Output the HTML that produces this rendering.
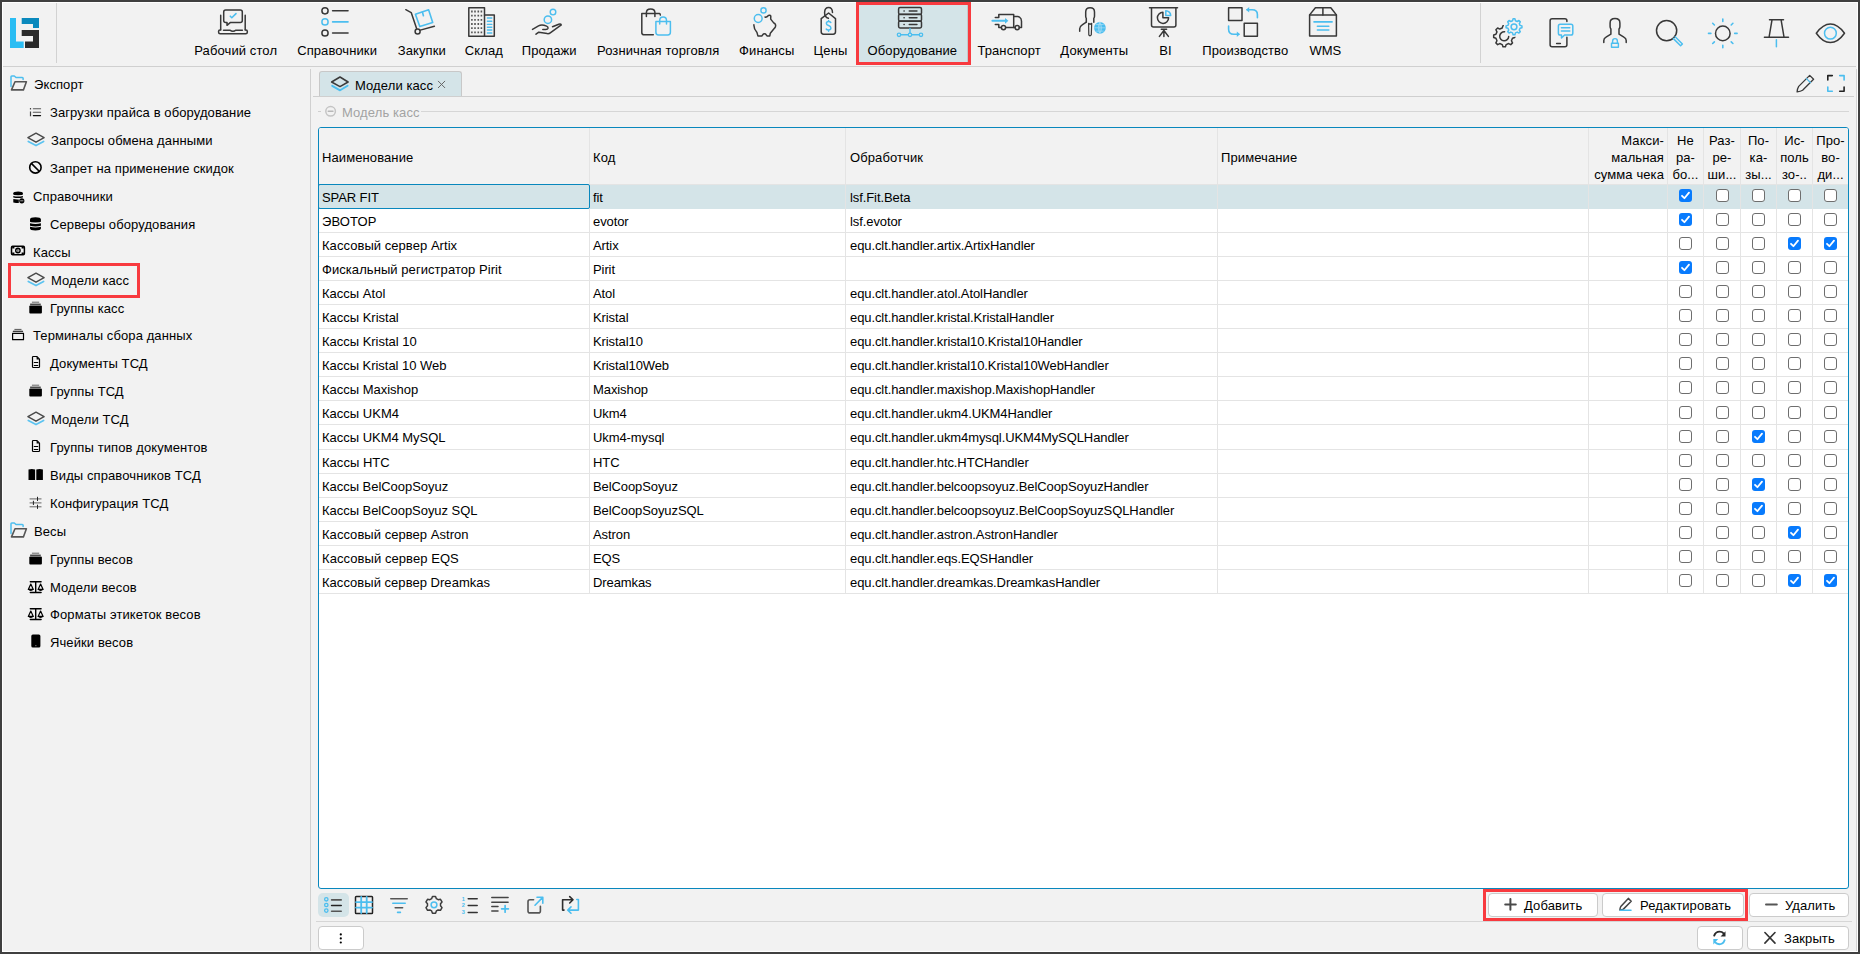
<!DOCTYPE html><html><head><meta charset="utf-8"><title>Модели касс</title><style>
*{box-sizing:border-box}
html,body{margin:0;padding:0}
body{width:1860px;height:954px;overflow:hidden;position:relative;background:#f2f2f2;font-family:"Liberation Sans",sans-serif;font-size:13px;color:#000}
.a{position:absolute}
.t{position:absolute;white-space:nowrap;line-height:16px;font-size:13px}
.hl{position:absolute;height:1px}
.vl{position:absolute;width:1px}
svg{position:absolute;overflow:visible}
.cb{position:absolute;width:13px;height:13px;border:1.3px solid #6e6e6e;border-radius:3px;background:#fff}
.cbc{position:absolute;width:13px;height:13px;border-radius:3px;background:#087bfd}
.btn{position:absolute;background:#fff;border:1px solid #cbcbcb;border-radius:4px}
</style></head><body>
<div class="a" style="left:0;top:0;width:1860px;height:2px;background:#404040"></div>
<div class="a" style="left:0;top:952px;width:1860px;height:2px;background:#404040"></div>
<div class="a" style="left:0;top:0;width:2px;height:954px;background:#404040"></div>
<div class="a" style="left:1858px;top:0;width:2px;height:954px;background:#404040"></div>
<div class="a" style="left:2px;top:2px;width:1856px;height:1px;background:#fff"></div>
<div class="a" style="left:2px;top:2px;width:1px;height:950px;background:#fff"></div>
<div class="a" style="left:1857px;top:2px;width:1px;height:950px;background:#fff"></div>
<div class="a" style="left:2px;top:951px;width:1856px;height:1px;background:#fff"></div>
<svg style="left:10px;top:18px" width="29" height="30" viewBox="0 0 29 30"><path d="M0 0H6V23.5H13.7V30H0Z" fill="#2bbdf3"/><path d="M11.7 0H29V10H23V6H11.7Z" fill="#0a89bd"/><path d="M11.7 12H29V30H15V23.5H23V18H11.7Z" fill="#2b2b2b"/></svg>
<div class="vl" style="left:56px;top:3px;height:60px;background:#d2d2d2"></div>
<div class="vl" style="left:1480px;top:3px;height:60px;background:#d2d2d2"></div>
<div class="hl" style="left:3px;top:66px;width:1853px;background:#d0d0d0"></div>
<div class="a" style="left:856px;top:2px;width:115px;height:63px;background:#d4e4e8;border:3px solid #f83a3f"></div>
<div class="vl" style="left:967px;top:5px;height:57px;background:#c4c8ca"></div>
<div class="t" style="left:135.7px;width:200px;text-align:center;top:43px;letter-spacing:0.100px">Рабочий стол</div>
<div class="t" style="left:237.1px;width:200px;text-align:center;top:43px;letter-spacing:0.100px">Справочники</div>
<div class="t" style="left:321.8px;width:200px;text-align:center;top:43px;letter-spacing:0.100px">Закупки</div>
<div class="t" style="left:383.9px;width:200px;text-align:center;top:43px;letter-spacing:0.100px">Склад</div>
<div class="t" style="left:449.2px;width:200px;text-align:center;top:43px;letter-spacing:0.100px">Продажи</div>
<div class="t" style="left:558.2px;width:200px;text-align:center;top:43px;letter-spacing:0.100px">Розничная торговля</div>
<div class="t" style="left:666.7px;width:200px;text-align:center;top:43px;letter-spacing:0.100px">Финансы</div>
<div class="t" style="left:730.5px;width:200px;text-align:center;top:43px;letter-spacing:0.100px">Цены</div>
<div class="t" style="left:812.4px;width:200px;text-align:center;top:43px;letter-spacing:0.100px">Оборудование</div>
<div class="t" style="left:909.1px;width:200px;text-align:center;top:43px;letter-spacing:0.100px">Транспорт</div>
<div class="t" style="left:994.3px;width:200px;text-align:center;top:43px;letter-spacing:0.100px">Документы</div>
<div class="t" style="left:1065.4px;width:200px;text-align:center;top:43px;letter-spacing:-0.090px">BI</div>
<div class="t" style="left:1145.3px;width:200px;text-align:center;top:43px;letter-spacing:0.100px">Производство</div>
<div class="t" style="left:1225.3px;width:200px;text-align:center;top:43px;letter-spacing:-0.090px">WMS</div>
<svg style="left:0;top:0" width="1860" height="954" viewBox="0 0 1860 954"><defs><clipPath id="gclip"><path d="M1480 14H1540V60H1480Z M1514 26.8m-10.3 0a10.3 10.3 0 1 0 20.6 0a10.3 10.3 0 1 0 -20.6 0Z" clip-rule="evenodd" fill-rule="evenodd"/></clipPath></defs><path d="M220.7 15.3V29.7M245.2 15.3V29.7" fill="none" stroke="#383838" stroke-width="1.5" stroke-linecap="round" stroke-linejoin="round" /><path d="M220.7 29.9H220Q218.6 29.9 218.6 31.3V32.2Q218.6 33.7 220.1 33.7H245.8Q247.3 33.7 247.3 32.2V31.3Q247.3 29.9 245.9 29.9H245.2" fill="none" stroke="#383838" stroke-width="1.5" stroke-linecap="round" stroke-linejoin="round" /><path d="M223.5 30.2H230.2Q231.2 31.2 232.9 31.2Q234.6 31.2 235.6 30.2H242.4" fill="none" stroke="#383838" stroke-width="1.5" stroke-linecap="round" stroke-linejoin="round" /><path d="M225.7 10.1H240.3Q242.3 10.1 242.3 12.1V20.4Q242.3 22.4 240.3 22.4H230.5L227 25.3V22.4H225.7Q223.7 22.4 223.7 20.4V12.1Q223.7 10.1 225.7 10.1Z" fill="none" stroke="#383838" stroke-width="1.5" stroke-linecap="round" stroke-linejoin="round" /><path d="M230.3 16.2L231.8 17.7L236 13.6" fill="none" stroke="#4cbeef" stroke-width="1.6" stroke-linecap="round" stroke-linejoin="round" /><circle cx="325" cy="10.8" r="3.1" fill="none" stroke="#383838" stroke-width="1.5"/><path d="M332.6 10.8H348" fill="none" stroke="#383838" stroke-width="1.6" stroke-linecap="round" stroke-linejoin="round" /><circle cx="325" cy="21.9" r="3.1" fill="none" stroke="#4cbeef" stroke-width="1.5"/><path d="M332.6 21.9H348" fill="none" stroke="#4cbeef" stroke-width="1.6" stroke-linecap="round" stroke-linejoin="round" /><circle cx="325" cy="33.0" r="3.1" fill="none" stroke="#383838" stroke-width="1.5"/><path d="M332.6 33.0H348" fill="none" stroke="#383838" stroke-width="1.6" stroke-linecap="round" stroke-linejoin="round" /><path d="M405.8 9.7L411.2 12.6L416.6 28.6" fill="none" stroke="#383838" stroke-width="1.5" stroke-linecap="round" stroke-linejoin="round" /><circle cx="417.6" cy="31.6" r="2.5" fill="none" stroke="#383838" stroke-width="1.5"/><path d="M420.3 30.1L434.4 26.2" fill="none" stroke="#383838" stroke-width="1.5" stroke-linecap="round" stroke-linejoin="round" /><path d="M415.4 14.3L428.6 9.8L432.7 22.5L419.8 26.6Z" fill="none" stroke="#4cbeef" stroke-width="1.6" stroke-linecap="round" stroke-linejoin="round" /><path d="M422.4 12L423.4 15.8" fill="none" stroke="#4cbeef" stroke-width="1.6" stroke-linecap="round" stroke-linejoin="round" /><path d="M468.8 7.8H484.5V36.2H468.8Z" fill="none" stroke="#383838" stroke-width="1.5" stroke-linecap="round" stroke-linejoin="round" /><path d="M484.5 15H494.3V36.2H484.5" fill="none" stroke="#383838" stroke-width="1.5" stroke-linecap="round" stroke-linejoin="round" /><path d="M471.09999999999997 10.6h1.6v1.8h-1.6zM471.09999999999997 14.799999999999999h1.6v1.8h-1.6zM471.09999999999997 18.900000000000002h1.6v1.8h-1.6zM471.09999999999997 23.1h1.6v1.8h-1.6zM471.09999999999997 27.3h1.6v1.8h-1.6zM471.09999999999997 31.4h1.6v1.8h-1.6zM474.2 10.6h1.6v1.8h-1.6zM474.2 14.799999999999999h1.6v1.8h-1.6zM474.2 18.900000000000002h1.6v1.8h-1.6zM474.2 23.1h1.6v1.8h-1.6zM474.2 27.3h1.6v1.8h-1.6zM474.2 31.4h1.6v1.8h-1.6zM477.5 10.6h1.6v1.8h-1.6zM477.5 14.799999999999999h1.6v1.8h-1.6zM477.5 18.900000000000002h1.6v1.8h-1.6zM477.5 23.1h1.6v1.8h-1.6zM477.5 27.3h1.6v1.8h-1.6zM477.5 31.4h1.6v1.8h-1.6zM480.59999999999997 10.6h1.6v1.8h-1.6zM480.59999999999997 14.799999999999999h1.6v1.8h-1.6zM480.59999999999997 18.900000000000002h1.6v1.8h-1.6zM480.59999999999997 23.1h1.6v1.8h-1.6zM480.59999999999997 27.3h1.6v1.8h-1.6zM480.59999999999997 31.4h1.6v1.8h-1.6z" fill="#555"/><path d="M487.4 18H491.8M487.4 21.2H491.8M487.4 24.4H491.8M487.4 27.2H491.8M487.4 30H491.8M487.4 33H491.8" fill="none" stroke="#4cbeef" stroke-width="1.4" stroke-linecap="round" stroke-linejoin="round" /><circle cx="553" cy="12.1" r="2.8" fill="none" stroke="#4cbeef" stroke-width="1.4"/><circle cx="547.9" cy="19.7" r="3.7" fill="none" stroke="#4cbeef" stroke-width="1.5"/><path d="M532.5 29.4L538.5 25.9Q541 24.6 544 25.3L546.6 26.1Q548.3 26.8 548 28.2Q547.6 29.4 545.8 29.4H542.8" fill="none" stroke="#383838" stroke-width="1.5" stroke-linecap="round" stroke-linejoin="round" /><path d="M552.5 26.8L558.8 24.2Q560.8 23.6 561.3 24.9L550.6 32.6Q549.2 33.8 547.2 33.6L538.8 32.2L536 34.2" fill="none" stroke="#383838" stroke-width="1.5" stroke-linecap="round" stroke-linejoin="round" /><path d="M653.3 34.8H644.2Q641.8 34.8 641.8 32.4V13.6H659.4Q660.4 13.8 660.3 15.1" fill="none" stroke="#383838" stroke-width="1.5" stroke-linecap="round" stroke-linejoin="round" /><path d="M646.4 16.6V12.6Q646.4 8.9 650.6 8.9Q654.9 8.9 654.9 12.6V16.6" fill="none" stroke="#383838" stroke-width="1.5" stroke-linecap="round" stroke-linejoin="round" /><path d="M655.9 21.6H670.4V32.3Q670.4 34.9 667.8 34.9H658.5Q655.9 34.9 655.9 32.3Z" fill="none" stroke="#4cbeef" stroke-width="1.5" stroke-linecap="round" stroke-linejoin="round" /><path d="M659.7 24V20.5Q659.7 17 663.1 17Q666.5 17 666.5 20.5V24" fill="none" stroke="#4cbeef" stroke-width="1.5" stroke-linecap="round" stroke-linejoin="round" /><circle cx="763.5" cy="10.4" r="2.6" fill="none" stroke="#4cbeef" stroke-width="1.4"/><circle cx="758.2" cy="18.5" r="3.9" fill="none" stroke="#4cbeef" stroke-width="1.5"/><path d="M753.9 24.7Q753.6 28.8 757 32.6L757.9 35.9H761.8L763.4 34Q764.5 33.4 765.5 34L767 35.9H769.8L770.3 33.2L774.6 28.1Q776 26.7 775.5 24.8Q775.1 23.4 773.9 23.1L770.7 19.1L770.8 16Q770.3 14.6 768.4 15.5Q766.5 17.6 765 17" fill="none" stroke="#383838" stroke-width="1.5" stroke-linecap="round" stroke-linejoin="round" /><path d="M828.6 13L835.5 18.7V31.8Q835.5 34.2 833.1 34.2H823.6Q821.2 34.2 821.2 31.8V18.7Z" fill="none" stroke="#383838" stroke-width="1.5" stroke-linecap="round" stroke-linejoin="round" /><path d="M828.4 18.2Q824.5 17.2 824.6 12.4Q824.8 7.6 828.6 7.6Q832.3 7.6 832.5 12.5" fill="none" stroke="#383838" stroke-width="1.5" stroke-linecap="round" stroke-linejoin="round" /><path d="M830.8 22.5Q830 21.6 828.6 21.6Q826.4 21.6 826.4 23.5Q826.4 25.1 828.6 25.6Q830.9 26.2 830.9 28Q830.9 30 828.5 30Q826.9 30 826.2 29M828.6 20.6V21.6M828.6 30V31.3" fill="none" stroke="#4cbeef" stroke-width="1.5" stroke-linecap="round" stroke-linejoin="round" /><path d="M900 7.5H920.1Q921.5 7.5 921.5 8.9V13.1Q921.5 14.5 920.1 14.5H900Q898.6 14.5 898.6 13.1V8.9Q898.6 7.5 900 7.5Z" fill="none" stroke="#383838" stroke-width="1.5" stroke-linecap="round" stroke-linejoin="round" /><path d="M904 11.0H904.2" fill="none" stroke="#383838" stroke-width="1.5" stroke-linecap="round" stroke-linejoin="round" /><path d="M909.3 11.0H916.9" fill="none" stroke="#383838" stroke-width="1.6" stroke-linecap="round" stroke-linejoin="round" /><path d="M900 14.2H920.1Q921.5 14.2 921.5 15.6V19.799999999999997Q921.5 21.2 920.1 21.2H900Q898.6 21.2 898.6 19.799999999999997V15.6Q898.6 14.2 900 14.2Z" fill="none" stroke="#383838" stroke-width="1.5" stroke-linecap="round" stroke-linejoin="round" /><path d="M904 17.7H904.2" fill="none" stroke="#383838" stroke-width="1.5" stroke-linecap="round" stroke-linejoin="round" /><path d="M909.3 17.7H916.9" fill="none" stroke="#383838" stroke-width="1.6" stroke-linecap="round" stroke-linejoin="round" /><path d="M900 21.0H920.1Q921.5 21.0 921.5 22.4V26.6Q921.5 28.0 920.1 28.0H900Q898.6 28.0 898.6 26.6V22.4Q898.6 21.0 900 21.0Z" fill="none" stroke="#383838" stroke-width="1.5" stroke-linecap="round" stroke-linejoin="round" /><path d="M904 24.5H904.2" fill="none" stroke="#383838" stroke-width="1.5" stroke-linecap="round" stroke-linejoin="round" /><path d="M909.3 24.5H916.9" fill="none" stroke="#383838" stroke-width="1.6" stroke-linecap="round" stroke-linejoin="round" /><path d="M910 28.5V33M900.7 34.8H908.2M911.8 34.8H919.3" fill="none" stroke="#4cbeef" stroke-width="1.4" stroke-linecap="round" stroke-linejoin="round" /><circle cx="899" cy="34.8" r="1.7" fill="none" stroke="#4cbeef" stroke-width="1.3"/><circle cx="910" cy="34.8" r="1.7" fill="none" stroke="#4cbeef" stroke-width="1.3"/><circle cx="921" cy="34.8" r="1.7" fill="none" stroke="#4cbeef" stroke-width="1.3"/><path d="M995.3 17.4H998.8V14.4H1013.7V27.4" fill="none" stroke="#383838" stroke-width="1.5" stroke-linecap="round" stroke-linejoin="round" /><path d="M995.3 24.4H998.8V27.4H1001.3M1005.7 27.4H1015M1019.3 27.4H1021.5V21.3Q1021.5 18.4 1019.5 17.2Q1018.7 16.6 1017.8 16.6H1013.7" fill="none" stroke="#383838" stroke-width="1.5" stroke-linecap="round" stroke-linejoin="round" /><circle cx="1003.5" cy="27.6" r="2.1" fill="none" stroke="#383838" stroke-width="1.5"/><circle cx="1017.2" cy="27.6" r="2.1" fill="none" stroke="#383838" stroke-width="1.5"/><path d="M992.4 20.8H1006" fill="none" stroke="#4cbeef" stroke-width="2.0" stroke-linecap="round" stroke-linejoin="round" /><path d="M1005 17.9L1008.4 20.8L1005 23.7Z" fill="#4cbeef"/><path d="M1086.3 21.9V18.4Q1085.7 17.4 1085.7 16.2V11.9Q1085.7 7.7 1090.1 7.7Q1094.5 7.7 1094.5 11.9V16.2Q1094.5 17.4 1093.8 18.4V22.2" fill="none" stroke="#383838" stroke-width="1.5" stroke-linecap="round" stroke-linejoin="round" /><path d="M1086.3 22.1L1082.2 24.8Q1079.7 26.3 1079.7 28.8V31.2" fill="none" stroke="#383838" stroke-width="1.5" stroke-linecap="round" stroke-linejoin="round" /><path d="M1088.6 23.3L1090.1 24.3L1091.7 23.3L1091.3 34.9L1090.1 35.9L1088.8 34.9Z" fill="none" stroke="#383838" stroke-width="1.2" stroke-linecap="round" stroke-linejoin="round" /><circle cx="1099.9" cy="27.8" r="5.9" fill="#4cbeef" stroke="#4cbeef" stroke-width="0"/><path d="M1094.5 27.8H1105.3M1099.9 22.2V33.4M1096.5 24.5H1103.3M1096.5 31.1H1103.3" fill="none" stroke="#a9def7" stroke-width="0.7" stroke-linecap="round" stroke-linejoin="round" /><path d="M1099.9 22.2Q1096.6 27.8 1099.9 33.4Q1103.2 27.8 1099.9 22.2" fill="none" stroke="#a9def7" stroke-width="0.7" stroke-linecap="round" stroke-linejoin="round" /><path d="M1149.5 7.7H1177.5" fill="none" stroke="#383838" stroke-width="1.5" stroke-linecap="round" stroke-linejoin="round" /><path d="M1151.5 7.9V25Q1151.5 27 1153.5 27H1173.9Q1175.9 27 1175.9 25V7.9" fill="none" stroke="#383838" stroke-width="1.5" stroke-linecap="round" stroke-linejoin="round" /><path d="M1161.3 29.3H1166.6M1163.9 29.3V36.4M1163.9 30.5L1159.4 36.4M1163.9 30.5L1168.4 36.4" fill="none" stroke="#383838" stroke-width="1.5" stroke-linecap="round" stroke-linejoin="round" /><path d="M1162.9 12.2A5.6 5.6 0 1 0 1168.6 17.8H1162.9Z" fill="none" stroke="#383838" stroke-width="1.5" stroke-linecap="round" stroke-linejoin="round" /><path d="M1165.8 10.7V15.6H1170.7A4.9 4.9 0 0 0 1165.8 10.7Z" fill="none" stroke="#4cbeef" stroke-width="1.5" stroke-linecap="round" stroke-linejoin="round" /><path d="M1228.6 7.8H1242V20.5H1228.6Z" fill="none" stroke="#383838" stroke-width="1.5" stroke-linecap="round" stroke-linejoin="round" /><path d="M1244.2 23.3H1257.4V36.3H1244.2Z" fill="none" stroke="#383838" stroke-width="1.5" stroke-linecap="round" stroke-linejoin="round" /><path d="M1257.4 17.7V14.5Q1257.4 9.8 1252.2 9.8H1247" fill="none" stroke="#4cbeef" stroke-width="1.6" stroke-linecap="round" stroke-linejoin="round" /><path d="M1246 9.8L1249.2 7.1V12.5Z" fill="#4cbeef"/><path d="M1228.6 26V29.2Q1228.6 34.2 1233.8 34.2H1238.8" fill="none" stroke="#4cbeef" stroke-width="1.6" stroke-linecap="round" stroke-linejoin="round" /><path d="M1240 34.2L1236.8 31.5V36.9Z" fill="#4cbeef"/><path d="M1309.6 14.9H1336.4V36H1309.6Z" fill="none" stroke="#383838" stroke-width="1.5" stroke-linecap="round" stroke-linejoin="round" /><path d="M1309.6 14.9L1315.4 7.7H1330.8L1336.4 14.9M1322.9 7.7V14.9" fill="none" stroke="#383838" stroke-width="1.5" stroke-linecap="round" stroke-linejoin="round" /><path d="M1314 21.9H1332.1M1317.4 26.3H1328.8M1317.4 30H1328.8" fill="none" stroke="#4cbeef" stroke-width="1.6" stroke-linecap="round" stroke-linejoin="round" /><path d="M1512.55 20.77 L1513.06 18.86 L1514.94 18.86 L1515.45 20.77 L1517.24 21.51 L1518.95 20.52 L1520.28 21.85 L1519.29 23.56 L1520.03 25.35 L1521.94 25.86 L1521.94 27.74 L1520.03 28.25 L1519.29 30.04 L1520.28 31.75 L1518.95 33.08 L1517.24 32.09 L1515.45 32.83 L1514.94 34.74 L1513.06 34.74 L1512.55 32.83 L1510.76 32.09 L1509.05 33.08 L1507.72 31.75 L1508.71 30.04 L1507.97 28.25 L1506.06 27.74 L1506.06 25.86 L1507.97 25.35 L1508.71 23.56 L1507.72 21.85 L1509.05 20.52 L1510.76 21.51Z" fill="none" stroke="#4cbeef" stroke-width="1.5" stroke-linecap="round" stroke-linejoin="round" /><circle cx="1514" cy="26.8" r="2.9" fill="none" stroke="#4cbeef" stroke-width="1.5"/><g clip-path="url(#gclip)"><path d="M1495.93 38.28 L1493.67 37.55 L1493.67 35.05 L1495.93 34.32 L1496.95 31.86 L1495.88 29.74 L1497.64 27.98 L1499.76 29.05 L1502.22 28.03 L1502.95 25.77 L1505.45 25.77 L1506.18 28.03 L1508.64 29.05 L1510.76 27.98 L1512.52 29.74 L1511.45 31.86 L1512.47 34.32 L1514.73 35.05 L1514.73 37.55 L1512.47 38.28 L1511.45 40.74 L1512.52 42.86 L1510.76 44.62 L1508.64 43.55 L1506.18 44.57 L1505.45 46.83 L1502.95 46.83 L1502.22 44.57 L1499.76 43.55 L1497.64 44.62 L1495.88 42.86 L1496.95 40.74Z" fill="none" stroke="#383838" stroke-width="1.5" stroke-linecap="round" stroke-linejoin="round" /></g><path d="M1504.6 31.8A4.5 4.5 0 1 0 1508.7 36.6" fill="none" stroke="#383838" stroke-width="1.5" stroke-linecap="round" stroke-linejoin="round" /><path d="M1566.9 21.5V20.8Q1566.9 18.8 1564.9 18.8H1552.1Q1550.1 18.8 1550.1 20.8V44.7Q1550.1 46.7 1552.1 46.7H1564.9Q1566.9 46.7 1566.9 44.7V37.2" fill="none" stroke="#383838" stroke-width="1.5" stroke-linecap="round" stroke-linejoin="round" /><path d="M1556.6 43.4H1560.4" fill="none" stroke="#383838" stroke-width="1.5" stroke-linecap="round" stroke-linejoin="round" /><path d="M1560.2 24.3H1571Q1572.8 24.3 1572.8 26.1V33.2Q1572.8 35 1571 35H1564.6L1561.5 38V35H1560.2Q1558.4 35 1558.4 33.2V26.1Q1558.4 24.3 1560.2 24.3Z" fill="none" stroke="#4cbeef" stroke-width="1.5" stroke-linecap="round" stroke-linejoin="round" /><path d="M1561.4 27.8H1569.8M1561.4 31.1H1569.8" fill="none" stroke="#4cbeef" stroke-width="1.5" stroke-linecap="round" stroke-linejoin="round" /><path d="M1603.8 42.6V40.6Q1603.8 38.4 1606 37.2L1610.9 34.2V29Q1610.1 28 1610.1 26.5V22.9Q1610.1 18.6 1615 18.6Q1619.9 18.6 1619.9 22.9V26.5Q1619.9 28 1619 29V34.2L1623.9 37.2Q1626.2 38.4 1626.2 40.6V42.6" fill="none" stroke="#383838" stroke-width="1.5" stroke-linecap="round" stroke-linejoin="round" /><path d="M1611.5 43.3H1618.4V47.2H1611.5Z" fill="none" stroke="#4cbeef" stroke-width="1.4" stroke-linecap="round" stroke-linejoin="round" /><path d="M1612.6 43.1V41.2Q1612.6 38.6 1615 38.6Q1617.4 38.6 1617.4 41.2V43.1" fill="none" stroke="#4cbeef" stroke-width="1.4" stroke-linecap="round" stroke-linejoin="round" /><circle cx="1666.6" cy="30.6" r="10.1" fill="none" stroke="#383838" stroke-width="1.5"/><path d="M1673.4 38.6L1680.6 45.8L1682.4 44L1675.2 36.8" fill="none" stroke="#4cbeef" stroke-width="1.5" stroke-linecap="round" stroke-linejoin="round" /><circle cx="1722.8" cy="33.4" r="7.3" fill="none" stroke="#383838" stroke-width="1.5"/><path d="M1734.70 33.40L1737.10 33.40M1731.21 41.81L1732.91 43.51M1722.80 45.30L1722.80 47.70M1714.39 41.81L1712.69 43.51M1710.90 33.40L1708.50 33.40M1714.39 24.99L1712.69 23.29M1722.80 21.50L1722.80 19.10M1731.21 24.99L1732.91 23.29" fill="none" stroke="#4cbeef" stroke-width="1.6" stroke-linecap="round" stroke-linejoin="round" /><path d="M1769.5 19.8H1783.5M1772 19.8L1769.1 37M1781.1 19.8L1784 37M1764.4 37.2H1788.5" fill="none" stroke="#383838" stroke-width="1.5" stroke-linecap="round" stroke-linejoin="round" /><path d="M1776.4 39.8V46.7" fill="none" stroke="#4cbeef" stroke-width="1.5" stroke-linecap="round" stroke-linejoin="round" /><path d="M1816.3 33.2Q1823 24 1830.4 24Q1837.8 24 1844.5 33.2Q1837.8 42.6 1830.4 42.6Q1823 42.6 1816.3 33.2Z" fill="none" stroke="#383838" stroke-width="1.5" stroke-linecap="round" stroke-linejoin="round" /><circle cx="1830.4" cy="33.2" r="5.9" fill="none" stroke="#4cbeef" stroke-width="1.5"/></svg>
<div class="t" style="left:34px;top:77px;letter-spacing:0.100px">Экспорт</div>
<svg style="left:0;top:0" width="1860" height="954" viewBox="0 0 1860 954"><path d="M11 86.4V76.8Q11 76 11.8 76H14.3L16 77.5H22.3Q23.1 77.5 23.1 78.3V79.6" fill="none" stroke="#4cbeef" stroke-width="1.5" stroke-linecap="round" stroke-linejoin="round" /><path d="M15 81.7H26.4L23.4 89.9H11.5Z" fill="none" stroke="#555" stroke-width="1.6" stroke-linecap="round" stroke-linejoin="round" /></svg>
<div class="t" style="left:50px;top:105px;letter-spacing:0.100px">Загрузки прайса в оборудование</div>
<svg style="left:0;top:0" width="1860" height="954" viewBox="0 0 1860 954"><path d="M29.9 108.1h1.2v1.3h-1.2zM29.9 111.6h1.2v4.7h-1.2z" fill="#444"/><path d="M33.3 108.7H40.6M33.3 112.3H40.6" fill="none" stroke="#555" stroke-width="1.1" stroke-linecap="round" stroke-linejoin="round" stroke-linecap="butt"/><path d="M33.3 115.6H40.6" fill="none" stroke="#111" stroke-width="1.1" stroke-linecap="round" stroke-linejoin="round" stroke-linecap="butt"/></svg>
<div class="t" style="left:51px;top:133px;letter-spacing:0.100px">Запросы обмена данными</div>
<svg style="left:0;top:0" width="1860" height="954" viewBox="0 0 1860 954"><path d="M27.9 137.6L36 133.1L44.1 137.6L36 142.2Z" fill="none" stroke="#4a4a4a" stroke-width="1.4" stroke-linecap="round" stroke-linejoin="round" /><path d="M28.3 141.5L36 145.6L43.6 141.5" fill="none" stroke="#5cc3f0" stroke-width="1.7" stroke-linecap="round" stroke-linejoin="round" /></svg>
<div class="t" style="left:50px;top:161px;letter-spacing:0.100px">Запрет на применение скидок</div>
<svg style="left:0;top:0" width="1860" height="954" viewBox="0 0 1860 954"><circle cx="35.4" cy="167.4" r="5.7" fill="none" stroke="#000" stroke-width="1.6"/><path d="M31.6 163.6L39.2 171.2" fill="none" stroke="#000" stroke-width="1.6" stroke-linecap="round" stroke-linejoin="round" /></svg>
<div class="t" style="left:33px;top:189px;letter-spacing:0.100px">Справочники</div>
<svg style="left:0;top:0" width="1860" height="954" viewBox="0 0 1860 954"><path d="M13.3 193.2Q13.3 191.4 18.1 191.4Q22.9 191.4 22.9 193.2V194.3Q22.9 195.2 18.1 195.2Q13.3 195.2 13.3 194.3Z" fill="#000"/><path d="M13.3 196Q18.1 197 22.9 196V197.6Q18.1 198.6 13.3 197.6Z" fill="#000"/><path d="M13.3 199Q16 199.6 18.8 199.4V203Q16 203 13.3 202.4Z" fill="#000"/><circle cx="21.8" cy="200.8" r="2.6" fill="#000" stroke="#000" stroke-width="0"/><path d="M20.6 200.8H23" fill="none" stroke="#ccc" stroke-width="0.8" stroke-linecap="round" stroke-linejoin="round" /></svg>
<div class="t" style="left:50px;top:217px;letter-spacing:0.100px">Серверы оборудования</div>
<svg style="left:0;top:0" width="1860" height="954" viewBox="0 0 1860 954"><path d="M30 219.3Q30 217.2 35.45 217.2Q40.9 217.2 40.9 219.3V221.5Q40.9 222.4 35.45 222.4Q30 222.4 30 221.5Z" fill="#000"/><path d="M30 223.2Q35.45 224.6 40.9 223.2V225.8Q35.45 227.2 30 225.8Z" fill="#000"/><path d="M30 226.8Q35.45 228.2 40.9 226.8V228.6Q40.9 230.5 35.45 230.5Q30 230.5 30 228.6Z" fill="#000"/></svg>
<div class="t" style="left:33px;top:245px;letter-spacing:0.100px">Кассы</div>
<svg style="left:0;top:0" width="1860" height="954" viewBox="0 0 1860 954"><path d="M12.6 246.3H23.3Q24.4 246.3 24.4 247.4V253.6Q24.4 254.7 23.3 254.7H12.6Q11.5 254.7 11.5 253.6V247.4Q11.5 246.3 12.6 246.3Z" fill="none" stroke="#000" stroke-width="1.5" stroke-linecap="round" stroke-linejoin="round" /><path d="M12.2 247h2.2v1.6h-2.2zM21.6 247h2.2v1.6h-2.2zM12.2 252.4h2.2v1.6h-2.2zM21.6 252.4h2.2v1.6h-2.2z" fill="#000"/><circle cx="17.9" cy="250.5" r="2.2" fill="none" stroke="#000" stroke-width="1.4"/><path d="M17.9 249.3V251.5" fill="none" stroke="#000" stroke-width="0.8" stroke-linecap="round" stroke-linejoin="round" /></svg>
<div class="t" style="left:51px;top:273px;letter-spacing:0.100px">Модели касс</div>
<svg style="left:0;top:0" width="1860" height="954" viewBox="0 0 1860 954"><path d="M27.9 277.6L36 273.1L44.1 277.6L36 282.2Z" fill="none" stroke="#4a4a4a" stroke-width="1.4" stroke-linecap="round" stroke-linejoin="round" /><path d="M28.3 281.5L36 285.6L43.6 281.5" fill="none" stroke="#5cc3f0" stroke-width="1.7" stroke-linecap="round" stroke-linejoin="round" /></svg>
<div class="t" style="left:50px;top:301px;letter-spacing:0.100px">Группы касс</div>
<svg style="left:0;top:0" width="1860" height="954" viewBox="0 0 1860 954"><path d="M32.3 302.2H38.8" fill="none" stroke="#666" stroke-width="1.0" stroke-linecap="round" stroke-linejoin="round" stroke-linecap="butt"/><path d="M30.5 304.2H40.4" fill="none" stroke="#000" stroke-width="1.0" stroke-linecap="round" stroke-linejoin="round" stroke-linecap="butt"/><path d="M30.3 305.6H40.9Q41.9 305.6 41.9 306.6V312.5Q41.9 313.5 40.9 313.5H30.3Q29.3 313.5 29.3 312.5V306.6Q29.3 305.6 30.3 305.6Z" fill="#000"/></svg>
<div class="t" style="left:33px;top:328px;letter-spacing:0.100px">Терминалы сбора данных</div>
<svg style="left:0;top:0" width="1860" height="954" viewBox="0 0 1860 954"><path d="M14.8 329.4H21.1" fill="none" stroke="#555" stroke-width="1.0" stroke-linecap="round" stroke-linejoin="round" stroke-linecap="butt"/><path d="M13.3 331.3H22.6" fill="none" stroke="#000" stroke-width="1.1" stroke-linecap="round" stroke-linejoin="round" stroke-linecap="butt"/><path d="M12.6 333.4H23.5V339.7H12.6Z" fill="none" stroke="#000" stroke-width="1.2" stroke-linecap="round" stroke-linejoin="round" /></svg>
<div class="t" style="left:50px;top:356px;letter-spacing:0.100px">Документы ТСД</div>
<svg style="left:0;top:0" width="1860" height="954" viewBox="0 0 1860 954"><path d="M33.3 356.5H36.8L39.5 359.2V366.7Q39.5 367.5 38.7 367.5H33.3Q32.5 367.5 32.5 366.7V357.3Q32.5 356.5 33.3 356.5Z" fill="none" stroke="#000" stroke-width="1.2" stroke-linecap="round" stroke-linejoin="round" /><path d="M36.6 356.8L39.2 359.4H36.6Z" fill="#000"/><path d="M34.2 362.5H37.8M34.2 365.5H37.8" fill="none" stroke="#000" stroke-width="1.0" stroke-linecap="round" stroke-linejoin="round" stroke-linecap="butt"/></svg>
<div class="t" style="left:50px;top:384px;letter-spacing:0.100px">Группы ТСД</div>
<svg style="left:0;top:0" width="1860" height="954" viewBox="0 0 1860 954"><path d="M32.3 385.2H38.8" fill="none" stroke="#666" stroke-width="1.0" stroke-linecap="round" stroke-linejoin="round" stroke-linecap="butt"/><path d="M30.5 387.2H40.4" fill="none" stroke="#000" stroke-width="1.0" stroke-linecap="round" stroke-linejoin="round" stroke-linecap="butt"/><path d="M30.3 388.6H40.9Q41.9 388.6 41.9 389.6V395.5Q41.9 396.5 40.9 396.5H30.3Q29.3 396.5 29.3 395.5V389.6Q29.3 388.6 30.3 388.6Z" fill="#000"/></svg>
<div class="t" style="left:51px;top:412px;letter-spacing:0.100px">Модели ТСД</div>
<svg style="left:0;top:0" width="1860" height="954" viewBox="0 0 1860 954"><path d="M27.9 416.6L36 412.1L44.1 416.6L36 421.2Z" fill="none" stroke="#4a4a4a" stroke-width="1.4" stroke-linecap="round" stroke-linejoin="round" /><path d="M28.3 420.5L36 424.6L43.6 420.5" fill="none" stroke="#5cc3f0" stroke-width="1.7" stroke-linecap="round" stroke-linejoin="round" /></svg>
<div class="t" style="left:50px;top:440px;letter-spacing:0.100px">Группы типов документов</div>
<svg style="left:0;top:0" width="1860" height="954" viewBox="0 0 1860 954"><path d="M33.3 440.5H36.8L39.5 443.2V450.7Q39.5 451.5 38.7 451.5H33.3Q32.5 451.5 32.5 450.7V441.3Q32.5 440.5 33.3 440.5Z" fill="none" stroke="#000" stroke-width="1.2" stroke-linecap="round" stroke-linejoin="round" /><path d="M36.6 440.8L39.2 443.4H36.6Z" fill="#000"/><path d="M34.2 446.5H37.8M34.2 449.5H37.8" fill="none" stroke="#000" stroke-width="1.0" stroke-linecap="round" stroke-linejoin="round" stroke-linecap="butt"/></svg>
<div class="t" style="left:50px;top:468px;letter-spacing:0.100px">Виды справочников ТСД</div>
<svg style="left:0;top:0" width="1860" height="954" viewBox="0 0 1860 954"><path d="M28.5 469.4Q31.8 468.4 35.1 469.4V480H28.5Z" fill="#000"/><path d="M36.3 469.4Q39.6 468.4 42.9 469.4V480H36.3Z" fill="#000"/></svg>
<div class="t" style="left:50px;top:496px;letter-spacing:0.100px">Конфигурация ТСД</div>
<svg style="left:0;top:0" width="1860" height="954" viewBox="0 0 1860 954"><path d="M30 498.9H41.1M30 502.9H41.1M30 506.8H41.1" fill="none" stroke="#555" stroke-width="0.9" stroke-linecap="round" stroke-linejoin="round" stroke-linecap="butt"/><path d="M37.5 497.2V500.6M33.4 501.2V504.6M37.5 505.1V508.5" fill="none" stroke="#222" stroke-width="1.0" stroke-linecap="round" stroke-linejoin="round" stroke-linecap="butt"/></svg>
<div class="t" style="left:34px;top:524px;letter-spacing:0.100px">Весы</div>
<svg style="left:0;top:0" width="1860" height="954" viewBox="0 0 1860 954"><path d="M11 533.4V523.8Q11 523 11.8 523H14.3L16 524.5H22.3Q23.1 524.5 23.1 525.3V526.6" fill="none" stroke="#4cbeef" stroke-width="1.5" stroke-linecap="round" stroke-linejoin="round" /><path d="M15 528.7H26.4L23.4 536.9H11.5Z" fill="none" stroke="#555" stroke-width="1.6" stroke-linecap="round" stroke-linejoin="round" /></svg>
<div class="t" style="left:50px;top:552px;letter-spacing:0.100px">Группы весов</div>
<svg style="left:0;top:0" width="1860" height="954" viewBox="0 0 1860 954"><path d="M32.3 553.2H38.8" fill="none" stroke="#666" stroke-width="1.0" stroke-linecap="round" stroke-linejoin="round" stroke-linecap="butt"/><path d="M30.5 555.2H40.4" fill="none" stroke="#000" stroke-width="1.0" stroke-linecap="round" stroke-linejoin="round" stroke-linecap="butt"/><path d="M30.3 556.6H40.9Q41.9 556.6 41.9 557.6V563.5Q41.9 564.5 40.9 564.5H30.3Q29.3 564.5 29.3 563.5V557.6Q29.3 556.6 30.3 556.6Z" fill="#000"/></svg>
<div class="t" style="left:50px;top:580px;letter-spacing:0.100px">Модели весов</div>
<svg style="left:0;top:0" width="1860" height="954" viewBox="0 0 1860 954"><path d="M30.3 581.8H41.1M35.7 581.8V592.5M30.3 592.5H41.1" fill="none" stroke="#000" stroke-width="1.4" stroke-linecap="round" stroke-linejoin="round" stroke-linecap="butt"/><path d="M30.8 584.1L28.3 589.4H33.3Z M40.6 584.1L38.1 589.4H43.1Z" fill="none" stroke="#000" stroke-width="1.2" stroke-linecap="round" stroke-linejoin="round" /><path d="M28.2 589H33.4Q33 591 30.8 591Q28.6 591 28.2 589Z M38 589H43.2Q42.8 591 40.6 591Q38.4 591 38 589Z" fill="#000"/></svg>
<div class="t" style="left:50px;top:607px;letter-spacing:0.100px">Форматы этикеток весов</div>
<svg style="left:0;top:0" width="1860" height="954" viewBox="0 0 1860 954"><path d="M30.3 608.8H41.1M35.7 608.8V619.5M30.3 619.5H41.1" fill="none" stroke="#000" stroke-width="1.4" stroke-linecap="round" stroke-linejoin="round" stroke-linecap="butt"/><path d="M30.8 611.1L28.3 616.4H33.3Z M40.6 611.1L38.1 616.4H43.1Z" fill="none" stroke="#000" stroke-width="1.2" stroke-linecap="round" stroke-linejoin="round" /><path d="M28.2 616H33.4Q33 618 30.8 618Q28.6 618 28.2 616Z M38 616H43.2Q42.8 618 40.6 618Q38.4 618 38 616Z" fill="#000"/></svg>
<div class="t" style="left:50px;top:635px;letter-spacing:0.100px">Ячейки весов</div>
<svg style="left:0;top:0" width="1860" height="954" viewBox="0 0 1860 954"><path d="M32.8 634.5H38.9Q40.4 634.5 40.4 636V646.1Q40.4 647.6 38.9 647.6H32.8Q31.3 647.6 31.3 646.1V636Q31.3 634.5 32.8 634.5Z" fill="#000"/><path d="M35 645h1.6v1.2h-1.6z" fill="#555"/></svg>
<div class="a" style="left:8px;top:263px;width:132px;height:35px;border:3px solid #f83a3f"></div>
<div class="vl" style="left:310px;top:69px;height:882px;background:#d0d0d0"></div>
<div class="vl" style="left:1856px;top:69px;height:882px;background:#d4d4d4"></div>
<div class="a" style="left:319px;top:71px;width:143px;height:26px;background:#d4e4e8;border:1px solid #c8c8c8;border-bottom:none;border-radius:3px 3px 0 0"></div>
<div class="hl" style="left:313px;top:96px;width:1541px;background:#cfcfcf"></div>
<div class="t" style="left:355px;top:78px;letter-spacing:0.100px">Модели касс</div>
<svg style="left:0;top:0" width="1860" height="954" viewBox="0 0 1860 954"><path d="M331.6 82L340 77L348.1 82L340 86.6Z" fill="none" stroke="#3a3a3a" stroke-width="1.5" stroke-linecap="round" stroke-linejoin="round" /><path d="M332.2 85.8L340.1 90.3L347.6 85.8" fill="none" stroke="#4cbeef" stroke-width="1.9" stroke-linecap="round" stroke-linejoin="round" /><path d="M438.3 81.2L444.8 87.7M444.8 81.2L438.3 87.7" fill="none" stroke="#666" stroke-width="1.0" stroke-linecap="round" stroke-linejoin="round" /><circle cx="330.6" cy="111.3" r="4.8" fill="none" stroke="#c4c4c4" stroke-width="1.5"/><path d="M328.2 111.3H333" fill="none" stroke="#b8b8b8" stroke-width="1.4" stroke-linecap="round" stroke-linejoin="round" /><path d="M1809.7 75.4L1813.6 79.3L1802.6 90.3Q1800.6 91.6 1797.1 91.9Q1797.4 88.4 1798.7 86.4Z" fill="none" stroke="#3a3a3a" stroke-width="1.3" stroke-linecap="round" stroke-linejoin="round" /><path d="M1806.5 78.6L1810.4 82.5" fill="none" stroke="#4cbeef" stroke-width="1.3" stroke-linecap="round" stroke-linejoin="round" /><path d="M1827.8 80V75.6H1832.3M1839.7 91.3H1844.1V87" fill="none" stroke="#222" stroke-width="1.6" stroke-linecap="round" stroke-linejoin="round" stroke-linecap="butt" stroke-linejoin="miter"/><path d="M1839.7 75.6H1844.1V80M1827.8 87V91.3H1832.3" fill="none" stroke="#4cbeef" stroke-width="1.6" stroke-linecap="round" stroke-linejoin="round" stroke-linecap="butt" stroke-linejoin="miter"/></svg>
<div class="hl" style="left:318px;top:111px;width:3px;background:#cfcfcf"></div>
<div class="t" style="left:342px;top:105px;color:#a3a3a3;letter-spacing:0.100px">Модель касс</div>
<div class="hl" style="left:421px;top:111px;width:1428px;background:#d6d6d6"></div>
<div class="a" style="left:318px;top:127px;width:1531px;height:762px;background:#fff;border:1px solid #0987bd;border-radius:3px"></div>
<div class="a" style="left:319px;top:128px;width:1529px;height:56px;background:#f2f2f2;border-radius:2px 2px 0 0"></div>
<div class="hl" style="left:319px;top:184px;width:1529px;background:#e4e4e4"></div>
<div class="a" style="left:319px;top:185px;width:1529px;height:24px;background:#d4e4e8"></div>
<div class="hl" style="left:319px;top:232px;width:1529px;background:#e4e4e4"></div>
<div class="hl" style="left:319px;top:256px;width:1529px;background:#e4e4e4"></div>
<div class="hl" style="left:319px;top:280px;width:1529px;background:#e4e4e4"></div>
<div class="hl" style="left:319px;top:304px;width:1529px;background:#e4e4e4"></div>
<div class="hl" style="left:319px;top:328px;width:1529px;background:#e4e4e4"></div>
<div class="hl" style="left:319px;top:352px;width:1529px;background:#e4e4e4"></div>
<div class="hl" style="left:319px;top:376px;width:1529px;background:#e4e4e4"></div>
<div class="hl" style="left:319px;top:400px;width:1529px;background:#e4e4e4"></div>
<div class="hl" style="left:319px;top:424px;width:1529px;background:#e4e4e4"></div>
<div class="hl" style="left:319px;top:449px;width:1529px;background:#e4e4e4"></div>
<div class="hl" style="left:319px;top:473px;width:1529px;background:#e4e4e4"></div>
<div class="hl" style="left:319px;top:497px;width:1529px;background:#e4e4e4"></div>
<div class="hl" style="left:319px;top:521px;width:1529px;background:#e4e4e4"></div>
<div class="hl" style="left:319px;top:545px;width:1529px;background:#e4e4e4"></div>
<div class="hl" style="left:319px;top:569px;width:1529px;background:#e4e4e4"></div>
<div class="hl" style="left:319px;top:593px;width:1529px;background:#e4e4e4"></div>
<div class="vl" style="left:589px;top:128px;height:466px;background:#e4e4e4"></div>
<div class="vl" style="left:845px;top:128px;height:466px;background:#e4e4e4"></div>
<div class="vl" style="left:1217px;top:128px;height:466px;background:#e4e4e4"></div>
<div class="vl" style="left:1588px;top:128px;height:466px;background:#e4e4e4"></div>
<div class="vl" style="left:1667px;top:128px;height:466px;background:#e4e4e4"></div>
<div class="vl" style="left:1703px;top:128px;height:466px;background:#e4e4e4"></div>
<div class="vl" style="left:1740px;top:128px;height:466px;background:#e4e4e4"></div>
<div class="vl" style="left:1776px;top:128px;height:466px;background:#e4e4e4"></div>
<div class="vl" style="left:1812px;top:128px;height:466px;background:#e4e4e4"></div>
<div class="a" style="left:318px;top:184px;width:272px;height:25px;border:1px solid #0987bd;border-radius:2px"></div>
<div class="t" style="left:322px;top:150px;letter-spacing:0.100px">Наименование</div>
<div class="t" style="left:593px;top:150px;letter-spacing:0.100px">Код</div>
<div class="t" style="left:850px;top:150px;letter-spacing:0.100px">Обработчик</div>
<div class="t" style="left:1221px;top:150px;letter-spacing:0.100px">Примечание</div>
<div class="t" style="left:1480px;width:184px;text-align:right;top:133px;letter-spacing:0.100px">Макси-</div><div class="t" style="left:1480px;width:184px;text-align:right;top:150px;letter-spacing:0.100px">мальная</div><div class="t" style="left:1480px;width:184px;text-align:right;top:167px;letter-spacing:0.100px">сумма чека</div>
<div class="t" style="left:1667px;width:37px;text-align:center;top:133px;letter-spacing:0.100px">Не</div><div class="t" style="left:1667px;width:37px;text-align:center;top:150px;letter-spacing:0.100px">ра-</div><div class="t" style="left:1667px;width:37px;text-align:center;top:167px;letter-spacing:0.100px">бо...</div>
<div class="t" style="left:1703px;width:38px;text-align:center;top:133px;letter-spacing:0.100px">Раз-</div><div class="t" style="left:1703px;width:38px;text-align:center;top:150px;letter-spacing:0.100px">ре-</div><div class="t" style="left:1703px;width:38px;text-align:center;top:167px;letter-spacing:0.100px">ши...</div>
<div class="t" style="left:1740px;width:37px;text-align:center;top:133px;letter-spacing:0.100px">По-</div><div class="t" style="left:1740px;width:37px;text-align:center;top:150px;letter-spacing:0.100px">ка-</div><div class="t" style="left:1740px;width:37px;text-align:center;top:167px;letter-spacing:0.100px">зы...</div>
<div class="t" style="left:1776px;width:37px;text-align:center;top:133px;letter-spacing:0.100px">Ис-</div><div class="t" style="left:1776px;width:37px;text-align:center;top:150px;letter-spacing:0.100px">поль</div><div class="t" style="left:1776px;width:37px;text-align:center;top:167px;letter-spacing:0.100px">зо-..</div>
<div class="t" style="left:1812px;width:37px;text-align:center;top:133px;letter-spacing:0.100px">Про-</div><div class="t" style="left:1812px;width:37px;text-align:center;top:150px;letter-spacing:0.100px">во-</div><div class="t" style="left:1812px;width:37px;text-align:center;top:167px;letter-spacing:0.100px">ди...</div>
<div class="t" style="left:322px;top:190px;letter-spacing:-0.090px">SPAR FIT</div>
<div class="t" style="left:593px;top:190px;letter-spacing:-0.090px">fit</div>
<div class="t" style="left:850px;top:190px;letter-spacing:-0.090px">lsf.Fit.Beta</div>
<div class="cbc" style="left:1679px;top:189px"><svg width="13" height="13" style="left:0;top:0"><path d="M3 6.8 L5.4 9.2 L10 3.6" fill="none" stroke="#fff" stroke-width="1.8" stroke-linecap="round" stroke-linejoin="round"/></svg></div>
<div class="cb" style="left:1716px;top:189px"></div>
<div class="cb" style="left:1752px;top:189px"></div>
<div class="cb" style="left:1788px;top:189px"></div>
<div class="cb" style="left:1824px;top:189px"></div>
<div class="t" style="left:322px;top:214px;letter-spacing:0.100px">ЭВОТОР</div>
<div class="t" style="left:593px;top:214px;letter-spacing:-0.090px">evotor</div>
<div class="t" style="left:850px;top:214px;letter-spacing:-0.090px">lsf.evotor</div>
<div class="cbc" style="left:1679px;top:213px"><svg width="13" height="13" style="left:0;top:0"><path d="M3 6.8 L5.4 9.2 L10 3.6" fill="none" stroke="#fff" stroke-width="1.8" stroke-linecap="round" stroke-linejoin="round"/></svg></div>
<div class="cb" style="left:1716px;top:213px"></div>
<div class="cb" style="left:1752px;top:213px"></div>
<div class="cb" style="left:1788px;top:213px"></div>
<div class="cb" style="left:1824px;top:213px"></div>
<div class="t" style="left:322px;top:238px;letter-spacing:0.050px">Кассовый сервер Artix</div>
<div class="t" style="left:593px;top:238px;letter-spacing:-0.090px">Artix</div>
<div class="t" style="left:850px;top:238px;letter-spacing:-0.090px">equ.clt.handler.artix.ArtixHandler</div>
<div class="cb" style="left:1679px;top:237px"></div>
<div class="cb" style="left:1716px;top:237px"></div>
<div class="cb" style="left:1752px;top:237px"></div>
<div class="cbc" style="left:1788px;top:237px"><svg width="13" height="13" style="left:0;top:0"><path d="M3 6.8 L5.4 9.2 L10 3.6" fill="none" stroke="#fff" stroke-width="1.8" stroke-linecap="round" stroke-linejoin="round"/></svg></div>
<div class="cbc" style="left:1824px;top:237px"><svg width="13" height="13" style="left:0;top:0"><path d="M3 6.8 L5.4 9.2 L10 3.6" fill="none" stroke="#fff" stroke-width="1.8" stroke-linecap="round" stroke-linejoin="round"/></svg></div>
<div class="t" style="left:322px;top:262px;letter-spacing:0.063px">Фискальный регистратор Pirit</div>
<div class="t" style="left:593px;top:262px;letter-spacing:-0.090px">Pirit</div>
<div class="cbc" style="left:1679px;top:261px"><svg width="13" height="13" style="left:0;top:0"><path d="M3 6.8 L5.4 9.2 L10 3.6" fill="none" stroke="#fff" stroke-width="1.8" stroke-linecap="round" stroke-linejoin="round"/></svg></div>
<div class="cb" style="left:1716px;top:261px"></div>
<div class="cb" style="left:1752px;top:261px"></div>
<div class="cb" style="left:1788px;top:261px"></div>
<div class="cb" style="left:1824px;top:261px"></div>
<div class="t" style="left:322px;top:286px;letter-spacing:0.016px">Кассы Atol</div>
<div class="t" style="left:593px;top:286px;letter-spacing:-0.090px">Atol</div>
<div class="t" style="left:850px;top:286px;letter-spacing:-0.090px">equ.clt.handler.atol.AtolHandler</div>
<div class="cb" style="left:1679px;top:285px"></div>
<div class="cb" style="left:1716px;top:285px"></div>
<div class="cb" style="left:1752px;top:285px"></div>
<div class="cb" style="left:1788px;top:285px"></div>
<div class="cb" style="left:1824px;top:285px"></div>
<div class="t" style="left:322px;top:310px;letter-spacing:-0.011px">Кассы Kristal</div>
<div class="t" style="left:593px;top:310px;letter-spacing:-0.090px">Kristal</div>
<div class="t" style="left:850px;top:310px;letter-spacing:-0.090px">equ.clt.handler.kristal.KristalHandler</div>
<div class="cb" style="left:1679px;top:309px"></div>
<div class="cb" style="left:1716px;top:309px"></div>
<div class="cb" style="left:1752px;top:309px"></div>
<div class="cb" style="left:1788px;top:309px"></div>
<div class="cb" style="left:1824px;top:309px"></div>
<div class="t" style="left:322px;top:334px;letter-spacing:-0.022px">Кассы Kristal 10</div>
<div class="t" style="left:593px;top:334px;letter-spacing:-0.090px">Kristal10</div>
<div class="t" style="left:850px;top:334px;letter-spacing:-0.090px">equ.clt.handler.kristal10.Kristal10Handler</div>
<div class="cb" style="left:1679px;top:333px"></div>
<div class="cb" style="left:1716px;top:333px"></div>
<div class="cb" style="left:1752px;top:333px"></div>
<div class="cb" style="left:1788px;top:333px"></div>
<div class="cb" style="left:1824px;top:333px"></div>
<div class="t" style="left:322px;top:358px;letter-spacing:-0.034px">Кассы Kristal 10 Web</div>
<div class="t" style="left:593px;top:358px;letter-spacing:-0.090px">Kristal10Web</div>
<div class="t" style="left:850px;top:358px;letter-spacing:-0.090px">equ.clt.handler.kristal10.Kristal10WebHandler</div>
<div class="cb" style="left:1679px;top:357px"></div>
<div class="cb" style="left:1716px;top:357px"></div>
<div class="cb" style="left:1752px;top:357px"></div>
<div class="cb" style="left:1788px;top:357px"></div>
<div class="cb" style="left:1824px;top:357px"></div>
<div class="t" style="left:322px;top:382px;letter-spacing:-0.017px">Кассы Maxishop</div>
<div class="t" style="left:593px;top:382px;letter-spacing:-0.090px">Maxishop</div>
<div class="t" style="left:850px;top:382px;letter-spacing:-0.090px">equ.clt.handler.maxishop.MaxishopHandler</div>
<div class="cb" style="left:1679px;top:381px"></div>
<div class="cb" style="left:1716px;top:381px"></div>
<div class="cb" style="left:1752px;top:381px"></div>
<div class="cb" style="left:1788px;top:381px"></div>
<div class="cb" style="left:1824px;top:381px"></div>
<div class="t" style="left:322px;top:406px;letter-spacing:0.016px">Кассы UKM4</div>
<div class="t" style="left:593px;top:406px;letter-spacing:-0.090px">Ukm4</div>
<div class="t" style="left:850px;top:406px;letter-spacing:-0.090px">equ.clt.handler.ukm4.UKM4Handler</div>
<div class="cb" style="left:1679px;top:406px"></div>
<div class="cb" style="left:1716px;top:406px"></div>
<div class="cb" style="left:1752px;top:406px"></div>
<div class="cb" style="left:1788px;top:406px"></div>
<div class="cb" style="left:1824px;top:406px"></div>
<div class="t" style="left:322px;top:430px;letter-spacing:-0.022px">Кассы UKM4 MySQL</div>
<div class="t" style="left:593px;top:430px;letter-spacing:-0.090px">Ukm4-mysql</div>
<div class="t" style="left:850px;top:430px;letter-spacing:-0.090px">equ.clt.handler.ukm4mysql.UKM4MySQLHandler</div>
<div class="cb" style="left:1679px;top:430px"></div>
<div class="cb" style="left:1716px;top:430px"></div>
<div class="cbc" style="left:1752px;top:430px"><svg width="13" height="13" style="left:0;top:0"><path d="M3 6.8 L5.4 9.2 L10 3.6" fill="none" stroke="#fff" stroke-width="1.8" stroke-linecap="round" stroke-linejoin="round"/></svg></div>
<div class="cb" style="left:1788px;top:430px"></div>
<div class="cb" style="left:1824px;top:430px"></div>
<div class="t" style="left:322px;top:455px;letter-spacing:0.029px">Кассы HTC</div>
<div class="t" style="left:593px;top:455px;letter-spacing:-0.090px">HTC</div>
<div class="t" style="left:850px;top:455px;letter-spacing:-0.090px">equ.clt.handler.htc.HTCHandler</div>
<div class="cb" style="left:1679px;top:454px"></div>
<div class="cb" style="left:1716px;top:454px"></div>
<div class="cb" style="left:1752px;top:454px"></div>
<div class="cb" style="left:1788px;top:454px"></div>
<div class="cb" style="left:1824px;top:454px"></div>
<div class="t" style="left:322px;top:479px;letter-spacing:-0.034px">Кассы BelCoopSoyuz</div>
<div class="t" style="left:593px;top:479px;letter-spacing:-0.090px">BelCoopSoyuz</div>
<div class="t" style="left:850px;top:479px;letter-spacing:-0.090px">equ.clt.handler.belcoopsoyuz.BelCoopSoyuzHandler</div>
<div class="cb" style="left:1679px;top:478px"></div>
<div class="cb" style="left:1716px;top:478px"></div>
<div class="cbc" style="left:1752px;top:478px"><svg width="13" height="13" style="left:0;top:0"><path d="M3 6.8 L5.4 9.2 L10 3.6" fill="none" stroke="#fff" stroke-width="1.8" stroke-linecap="round" stroke-linejoin="round"/></svg></div>
<div class="cb" style="left:1788px;top:478px"></div>
<div class="cb" style="left:1824px;top:478px"></div>
<div class="t" style="left:322px;top:503px;letter-spacing:-0.042px">Кассы BelCoopSoyuz SQL</div>
<div class="t" style="left:593px;top:503px;letter-spacing:-0.090px">BelCoopSoyuzSQL</div>
<div class="t" style="left:850px;top:503px;letter-spacing:-0.090px">equ.clt.handler.belcoopsoyuz.BelCoopSoyuzSQLHandler</div>
<div class="cb" style="left:1679px;top:502px"></div>
<div class="cb" style="left:1716px;top:502px"></div>
<div class="cbc" style="left:1752px;top:502px"><svg width="13" height="13" style="left:0;top:0"><path d="M3 6.8 L5.4 9.2 L10 3.6" fill="none" stroke="#fff" stroke-width="1.8" stroke-linecap="round" stroke-linejoin="round"/></svg></div>
<div class="cb" style="left:1788px;top:502px"></div>
<div class="cb" style="left:1824px;top:502px"></div>
<div class="t" style="left:322px;top:527px;letter-spacing:0.043px">Кассовый сервер Astron</div>
<div class="t" style="left:593px;top:527px;letter-spacing:-0.090px">Astron</div>
<div class="t" style="left:850px;top:527px;letter-spacing:-0.090px">equ.clt.handler.astron.AstronHandler</div>
<div class="cb" style="left:1679px;top:526px"></div>
<div class="cb" style="left:1716px;top:526px"></div>
<div class="cb" style="left:1752px;top:526px"></div>
<div class="cbc" style="left:1788px;top:526px"><svg width="13" height="13" style="left:0;top:0"><path d="M3 6.8 L5.4 9.2 L10 3.6" fill="none" stroke="#fff" stroke-width="1.8" stroke-linecap="round" stroke-linejoin="round"/></svg></div>
<div class="cb" style="left:1824px;top:526px"></div>
<div class="t" style="left:322px;top:551px;letter-spacing:0.066px">Кассовый сервер EQS</div>
<div class="t" style="left:593px;top:551px;letter-spacing:-0.090px">EQS</div>
<div class="t" style="left:850px;top:551px;letter-spacing:-0.090px">equ.clt.handler.eqs.EQSHandler</div>
<div class="cb" style="left:1679px;top:550px"></div>
<div class="cb" style="left:1716px;top:550px"></div>
<div class="cb" style="left:1752px;top:550px"></div>
<div class="cb" style="left:1788px;top:550px"></div>
<div class="cb" style="left:1824px;top:550px"></div>
<div class="t" style="left:322px;top:575px;letter-spacing:0.031px">Кассовый сервер Dreamkas</div>
<div class="t" style="left:593px;top:575px;letter-spacing:-0.090px">Dreamkas</div>
<div class="t" style="left:850px;top:575px;letter-spacing:-0.090px">equ.clt.handler.dreamkas.DreamkasHandler</div>
<div class="cb" style="left:1679px;top:574px"></div>
<div class="cb" style="left:1716px;top:574px"></div>
<div class="cb" style="left:1752px;top:574px"></div>
<div class="cbc" style="left:1788px;top:574px"><svg width="13" height="13" style="left:0;top:0"><path d="M3 6.8 L5.4 9.2 L10 3.6" fill="none" stroke="#fff" stroke-width="1.8" stroke-linecap="round" stroke-linejoin="round"/></svg></div>
<div class="cbc" style="left:1824px;top:574px"><svg width="13" height="13" style="left:0;top:0"><path d="M3 6.8 L5.4 9.2 L10 3.6" fill="none" stroke="#fff" stroke-width="1.8" stroke-linecap="round" stroke-linejoin="round"/></svg></div>
<div class="a" style="left:318px;top:893px;width:31px;height:24px;background:#d4e4e8;border-radius:5px"></div>
<svg style="left:0;top:0" width="1860" height="954" viewBox="0 0 1860 954"><circle cx="326.3" cy="899.3" r="1.7" fill="none" stroke="#4cbeef" stroke-width="1.3"/><path d="M331.6 899.9H341.2" fill="none" stroke="#555" stroke-width="1.6" stroke-linecap="round" stroke-linejoin="round" /><circle cx="326.3" cy="905" r="1.7" fill="none" stroke="#4cbeef" stroke-width="1.3"/><path d="M331.6 905.5H341.2" fill="none" stroke="#222" stroke-width="1.6" stroke-linecap="round" stroke-linejoin="round" /><circle cx="326.3" cy="910.6" r="1.7" fill="none" stroke="#4cbeef" stroke-width="1.3"/><path d="M331.6 911.2H341.2" fill="none" stroke="#555" stroke-width="1.6" stroke-linecap="round" stroke-linejoin="round" /><path d="M356.3 896.5H371.7Q372.5 896.5 372.5 897.3V912.7Q372.5 913.5 371.7 913.5H356.3Q355.5 913.5 355.5 912.7V897.3Q355.5 896.5 356.3 896.5Z" fill="none" stroke="#222" stroke-width="1.5" stroke-linecap="round" stroke-linejoin="round" /><path d="M361.2 897V913M366.7 897V913M356 902.1H372M356 907.6H372" fill="none" stroke="#4cbeef" stroke-width="1.8" stroke-linecap="round" stroke-linejoin="round" stroke-linecap="butt"/><path d="M390.8 898.8H407.2M395.2 907.7H402.6" fill="none" stroke="#555" stroke-width="1.6" stroke-linecap="round" stroke-linejoin="round" /><path d="M392.8 903.3H405.2M397.6 912.4H400.4" fill="none" stroke="#4cbeef" stroke-width="1.6" stroke-linecap="round" stroke-linejoin="round" /><path d="M431.63 898.64 L432.45 896.44 L435.55 896.44 L436.37 898.64 L438.15 899.67 L440.46 899.28 L442.01 901.96 L440.52 903.77 L440.52 905.83 L442.01 907.64 L440.46 910.32 L438.15 909.93 L436.37 910.96 L435.55 913.16 L432.45 913.16 L431.63 910.96 L429.85 909.93 L427.54 910.32 L425.99 907.64 L427.48 905.83 L427.48 903.77 L425.99 901.96 L427.54 899.28 L429.85 899.67Z" fill="none" stroke="#3c3c3c" stroke-width="1.5" stroke-linecap="round" stroke-linejoin="round" /><circle cx="434" cy="904.8" r="2.9" fill="none" stroke="#4cbeef" stroke-width="1.5"/><path d="M468.2 898.7H477.2M468.2 905.5H477.2M468.2 912.4H477.2" fill="none" stroke="#333" stroke-width="1.5" stroke-linecap="round" stroke-linejoin="round" /><text x="463.3" y="900.8" font-family="Liberation Sans" font-weight="bold" font-size="5.6" fill="#4cbeef" text-anchor="middle">1</text><text x="463.3" y="907.4" font-family="Liberation Sans" font-weight="bold" font-size="5.6" fill="#4cbeef" text-anchor="middle">2</text><text x="463.3" y="914" font-family="Liberation Sans" font-weight="bold" font-size="5.6" fill="#4cbeef" text-anchor="middle">3</text><path d="M491.8 897.5H508.1M491.8 902.2H508.1M491.8 906.6H498M491.8 911.1H498" fill="none" stroke="#444" stroke-width="1.5" stroke-linecap="round" stroke-linejoin="round" /><path d="M505.1 905.6V912.2M501.6 908.8H508.4" fill="none" stroke="#4cbeef" stroke-width="1.7" stroke-linecap="round" stroke-linejoin="round" /><path d="M533.6 899.8H530Q528 899.8 528 901.8V910.9Q528 912.9 530 912.9H538.4Q540.4 912.9 540.4 910.9V906.3" fill="none" stroke="#555" stroke-width="1.6" stroke-linecap="round" stroke-linejoin="round" /><path d="M535 905.2L542.7 897.4M537 897.2H542.8V903.2" fill="none" stroke="#4cbeef" stroke-width="1.6" stroke-linecap="round" stroke-linejoin="round" /><path d="M564 910.1H562.6V899.8H572.2M569.7 896.6L573 899.8L569.7 903" fill="none" stroke="#2e2e2e" stroke-width="1.6" stroke-linecap="round" stroke-linejoin="round" /><path d="M576.8 899.5H578.4V910.1H568.4M571 906.9L567.8 910.1L571 913.2" fill="none" stroke="#4cbeef" stroke-width="1.6" stroke-linecap="round" stroke-linejoin="round" /></svg>
<div class="hl" style="left:316px;top:921px;width:1536px;background:#d6d6d6"></div>
<div class="btn" style="left:318px;top:926px;width:46px;height:24px"></div>
<div class="a" style="left:1483px;top:889px;width:265px;height:32px;border:3px solid #f83a3f"></div>
<div class="btn" style="left:1488px;top:893px;width:110px;height:24px"></div>
<div class="t" style="left:1524px;top:898px;letter-spacing:0.100px">Добавить</div>
<div class="btn" style="left:1602px;top:893px;width:142px;height:24px"></div>
<div class="t" style="left:1640px;top:898px;letter-spacing:0.100px">Редактировать</div>
<div class="btn" style="left:1749px;top:893px;width:100px;height:24px"></div>
<div class="t" style="left:1785px;top:898px;letter-spacing:0.100px">Удалить</div>
<div class="btn" style="left:1697px;top:926px;width:46px;height:24px"></div>
<div class="btn" style="left:1747px;top:926px;width:102px;height:24px"></div>
<div class="t" style="left:1784px;top:931px;letter-spacing:0.100px">Закрыть</div>
<svg style="left:0;top:0" width="1860" height="954" viewBox="0 0 1860 954"><circle cx="340.8" cy="934.4" r="1.1" fill="#000" stroke="#000" stroke-width="0"/><circle cx="340.8" cy="938.4" r="1.1" fill="#000" stroke="#000" stroke-width="0"/><circle cx="340.8" cy="942.5" r="1.1" fill="#000" stroke="#000" stroke-width="0"/><path d="M1505.2 904.4H1515.8M1510.4 899V909.7" fill="none" stroke="#4a4a4a" stroke-width="2.0" stroke-linecap="round" stroke-linejoin="round" stroke-linecap="butt"/><path d="M1628.3 898.4L1631.2 901.3L1623.4 909.1Q1621.8 909.9 1619.9 910Q1620 908.1 1620.8 906.5Z" fill="none" stroke="#444" stroke-width="1.5" stroke-linecap="round" stroke-linejoin="round" /><path d="M1620.2 910.2H1631" fill="none" stroke="#4cbeef" stroke-width="1.5" stroke-linecap="round" stroke-linejoin="round" /><path d="M1766 904.5H1776.8" fill="none" stroke="#555" stroke-width="2.0" stroke-linecap="round" stroke-linejoin="round" stroke-linecap="butt"/><path d="M1714.2 935.6Q1715.6 931.6 1719.6 931.6Q1722 931.6 1723.6 933.4" fill="none" stroke="#2a2a2a" stroke-width="1.9" stroke-linecap="round" stroke-linejoin="round" stroke-linecap="butt"/><path d="M1725.5 931.2V936.6H1720.6Z" fill="#2a2a2a"/><path d="M1724.6 940.2Q1723.2 944.2 1719.2 944.2Q1716.8 944.2 1715.2 942.4" fill="none" stroke="#4cbeef" stroke-width="1.9" stroke-linecap="round" stroke-linejoin="round" stroke-linecap="butt"/><path d="M1713.3 944.6V939.1H1718.2Z" fill="#4cbeef"/><path d="M1764.9 932.5L1775 943.1M1775 932.5L1764.9 943.1" fill="none" stroke="#333" stroke-width="1.6" stroke-linecap="round" stroke-linejoin="round" /></svg>
</body></html>
